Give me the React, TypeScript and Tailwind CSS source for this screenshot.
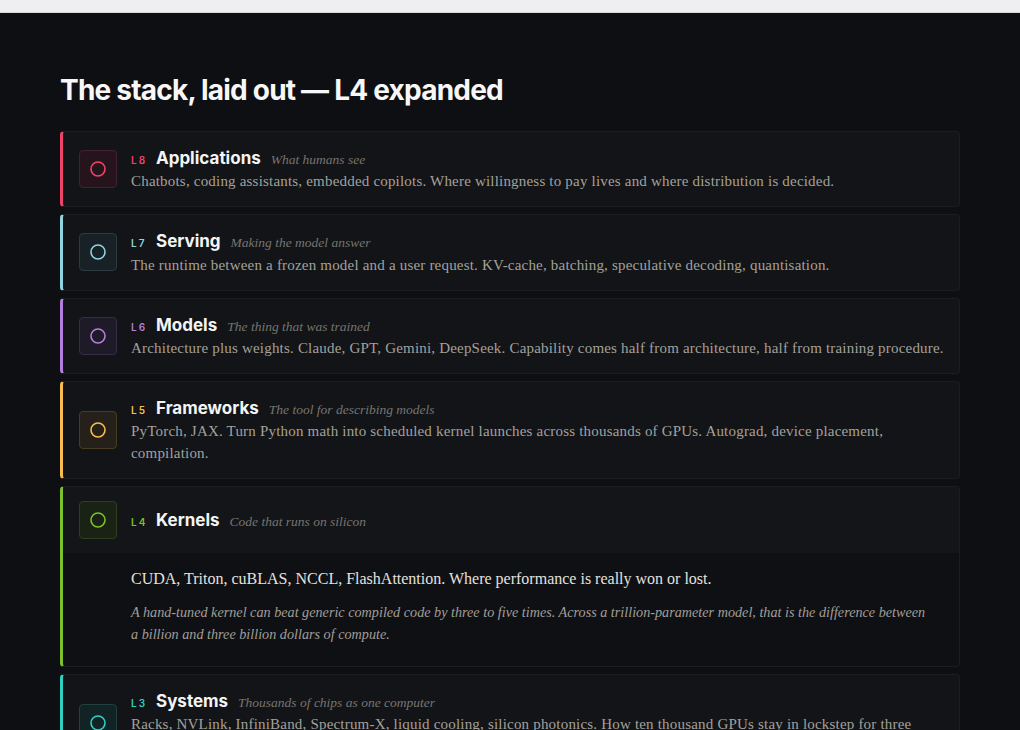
import { useState } from 'react'

type Layer = {
  id: string
  name: string
  tagline: string
  body: string
  note?: string
  accent: string
  label: string
  box: string
  ring: string
}

const LAYERS: Layer[] = [
  {
    id: 'L8',
    name: 'Applications',
    tagline: 'What humans see',
    body: 'Chatbots, coding assistants, embedded copilots. Where willingness to pay lives and where distribution is decided.',
    accent: 'border-l-[#f0436a]',
    label: 'text-[#f0436a]',
    box: 'bg-[#26141d] border-[#45202e]',
    ring: '#f0436a',
  },
  {
    id: 'L7',
    name: 'Serving',
    tagline: 'Making the model answer',
    body: 'The runtime between a frozen model and a user request. KV-cache, batching, speculative decoding, quantisation.',
    accent: 'border-l-[#8fd4df]',
    label: 'text-[#8fd4df]',
    box: 'bg-[#172126] border-[#2c3b40]',
    ring: '#8fd4df',
  },
  {
    id: 'L6',
    name: 'Models',
    tagline: 'The thing that was trained',
    body: 'Architecture plus weights. Claude, GPT, Gemini, DeepSeek. Capability comes half from architecture, half from training procedure.',
    accent: 'border-l-[#b47fdc]',
    label: 'text-[#b47fdc]',
    box: 'bg-[#1f1a28] border-[#372c45]',
    ring: '#b47fdc',
  },
  {
    id: 'L5',
    name: 'Frameworks',
    tagline: 'The tool for describing models',
    body: 'PyTorch, JAX. Turn Python math into scheduled kernel launches across thousands of GPUs. Autograd, device placement, compilation.',
    accent: 'border-l-[#f7be4f]',
    label: 'text-[#f7be4f]',
    box: 'bg-[#25211a] border-[#4a3c22]',
    ring: '#f7be4f',
  },
  {
    id: 'L4',
    name: 'Kernels',
    tagline: 'Code that runs on silicon',
    body: 'CUDA, Triton, cuBLAS, NCCL, FlashAttention. Where performance is really won or lost.',
    note: 'A hand-tuned kernel can beat generic compiled code by three to five times. Across a trillion-parameter model, that is the difference between a billion and three billion dollars of compute.',
    accent: 'border-l-[#7cc12c]',
    label: 'text-[#7cc12c]',
    box: 'bg-[#1a2115] border-[#2e3f21]',
    ring: '#7cc12c',
  },
  {
    id: 'L3',
    name: 'Systems',
    tagline: 'Thousands of chips as one computer',
    body: 'Racks, NVLink, InfiniBand, Spectrum-X, liquid cooling, silicon photonics. How ten thousand GPUs stay in lockstep for three months.',
    accent: 'border-l-[#2fcfc1]',
    label: 'text-[#2fcfc1]',
    box: 'bg-[#122325] border-[#22403f]',
    ring: '#2fcfc1',
  },
  {
    id: 'L2',
    name: 'Chips',
    tagline: 'Where the arithmetic happens',
    body: 'GPUs, TPUs, custom accelerators. Tensor cores, HBM stacks, packaging. The unit everything above is priced in.',
    accent: 'border-l-[#5b8df0]',
    label: 'text-[#5b8df0]',
    box: 'bg-[#151c2a] border-[#263552]',
    ring: '#5b8df0',
  },
]

const serif = "font-['Liberation_Serif',serif]"
const sans = "font-['Inter','Liberation_Sans',sans-serif]"

function LayerIcon({ layer }: { layer: Layer }) {
  return (
    <div className={`flex h-[38px] w-[38px] shrink-0 items-center justify-center rounded-[4px] border ${layer.box}`}>
      <svg width="18" height="18" viewBox="0 0 18 18" fill="none">
        <circle cx="9" cy="9" r="7" stroke={layer.ring} strokeWidth="1.6" />
      </svg>
    </div>
  )
}

function LayerTitle({ layer }: { layer: Layer }) {
  return (
    <div className="flex items-baseline">
      <span className={`${sans} w-[25px] text-[10px] font-semibold tracking-[0.22em] ${layer.label}`}>
        {layer.id}
      </span>
      <span className={`${sans} text-[17px] font-bold leading-[24px] text-[#f4f4f5]`}>{layer.name}</span>
      <span className={`${serif} ml-[10px] text-[13.5px] italic text-[#77746f]`}>{layer.tagline}</span>
    </div>
  )
}

function LayerCard({ layer, open }: { layer: Layer; open: boolean }) {
  if (open) {
    return (
      <div className={`overflow-hidden rounded-[4px] border border-[#1b1d21] border-l-[3px] ${layer.accent} bg-[#0f1013]`}>
        <div className="flex items-center gap-[14px] bg-[#131518] py-[14px] pl-[16px] pr-[14px]">
          <LayerIcon layer={layer} />
          <LayerTitle layer={layer} />
        </div>
        <div className="pb-[21px] pl-[68px] pr-[28px] pt-[15px]">
          <p className={`${serif} text-[16px] leading-[22px] text-[#e4e2de]`}>{layer.body}</p>
          <p className={`${serif} mt-[11px] text-[14.2px] italic leading-[22px] text-[#a19e99]`}>{layer.note}</p>
        </div>
      </div>
    )
  }
  return (
    <div className={`flex items-center gap-[14px] rounded-[4px] border border-[#1b1d21] border-l-[3px] ${layer.accent} bg-[#121417] py-[14px] pl-[16px] pr-[14px]`}>
      <LayerIcon layer={layer} />
      <div className="min-w-0 flex-1">
        <LayerTitle layer={layer} />
        <p className={`${serif} text-[15px] leading-[22px] tracking-[0.013em] text-[#a4a19c]`}>{layer.body}</p>
      </div>
    </div>
  )
}

export default function App() {
  const [expanded] = useState('L4')

  return (
    <div className="min-h-screen bg-[#0e0f12]">
      <div className="h-[13px] border-b border-[#d8d7da] bg-[#efeef0]" />
      <div className="px-[60px] pb-16 pt-[59px]">
        <h1 className={`${sans} mb-[23px] text-[28px] font-bold leading-[36px] tracking-[-0.028em] text-[#f7f7f8]`}>
          The stack, laid out — L4 expanded
        </h1>
        <div className="flex flex-col gap-[7px]">
          {LAYERS.map((layer) => (
            <LayerCard key={layer.id} layer={layer} open={layer.id === expanded} />
          ))}
        </div>
      </div>
    </div>
  )
}
